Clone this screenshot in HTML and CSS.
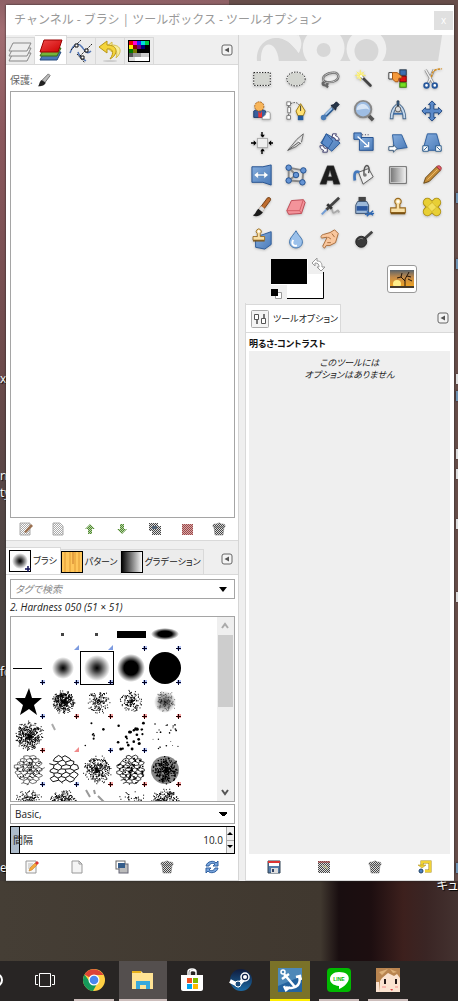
FILE: index.html
```html
<!DOCTYPE html>
<html lang="ja">

<head>
	<title>チャンネル - ブラシ | ツールボックス - ツールオプション</title>
	<meta charset="utf-8">
	<meta name="viewport" content="width=device-width, initial-scale=1">
	<link rel="stylesheet" href="styles.css">
</head>

<body>
	<!-- shared paints and symbols -->
	<svg class="defs" width="0" height="0" aria-hidden="true">
		<defs>
			<linearGradient id="blue" x1="0" y1="0" x2="1" y2="1"><stop offset="0" stop-color="#86aede"/><stop offset="1" stop-color="#4a7ab8"/></linearGradient>
			<linearGradient id="grey" x1="0" y1="0" x2="1" y2="0"><stop offset="0" stop-color="#777"/><stop offset="1" stop-color="#eee"/></linearGradient>
			<linearGradient id="blackWhite" x1="0" y1="0" x2="1" y2="0"><stop offset="0" stop-color="#000"/><stop offset="1" stop-color="#fff"/></linearGradient>
			<linearGradient id="sunset" x1="0" y1="0" x2="0" y2="1"><stop offset="0" stop-color="#59636a"/><stop offset="0.4" stop-color="#c28a4a"/><stop offset="1" stop-color="#f7a81c"/></linearGradient>
			<linearGradient id="steamBlue" x1="0" y1="0" x2="0" y2="1"><stop offset="0" stop-color="#101b3c"/><stop offset="1" stop-color="#1c6ba5"/></linearGradient>
			<linearGradient id="redSheet" x1="0" y1="0" x2="1" y2="1"><stop offset="0" stop-color="#f04a4a"/><stop offset="1" stop-color="#c00"/></linearGradient>
			<radialGradient id="soft"><stop offset="0" stop-color="#000"/><stop offset="0.25" stop-color="#000" stop-opacity="0.8"/><stop offset="1" stop-color="#000" stop-opacity="0"/></radialGradient>
			<radialGradient id="hard"><stop offset="0.5" stop-color="#000"/><stop offset="1" stop-color="#000" stop-opacity="0"/></radialGradient>
			<pattern id="ditherBlack" width="2" height="2" patternUnits="userSpaceOnUse"><rect width="2" height="2" fill="#ddd"/><path d="M0 0h1v1h-1zM1 1h1v1h-1z" fill="#444"/></pattern>
			<pattern id="ditherGrey" width="2" height="2" patternUnits="userSpaceOnUse"><rect width="2" height="2" fill="#fff"/><path d="M0 0h1v1h-1zM1 1h1v1h-1z" fill="#aaa"/></pattern>
			<pattern id="ditherGreen" width="2" height="2" patternUnits="userSpaceOnUse"><rect width="2" height="2" fill="#b9d2a8"/><path d="M0 0h1v1h-1zM1 1h1v1h-1z" fill="#4f8a30"/></pattern>
			<pattern id="ditherRed" width="2" height="2" patternUnits="userSpaceOnUse"><rect width="2" height="2" fill="#d8a8a8"/><path d="M0 0h1v1h-1zM1 1h1v1h-1z" fill="#9a4848"/></pattern>
		</defs>
		<symbol id="collapse" viewBox="0 0 12 12"><rect x="1" y="1" width="10" height="10" rx="2" fill="#f4f4f4" stroke="#666"/><path d="M8 3.500v5L3.500 6z" fill="#555"/></symbol>
		<symbol id="trash" viewBox="0 0 16 16"><path d="M2 4c0-1 3-1 4-1l1-1h2l1 1c1 0 4 0 4 1v2H2zM3 6h10l-1 8H4z" fill="url(#ditherBlack)" stroke="#777" stroke-width="0.500"/></symbol>
		<symbol id="page" viewBox="0 0 16 16"><path d="M3 2h7l3 3v9H3z" fill="#f4f4f4" stroke="#999"/><path d="M10 2v3h3" fill="none" stroke="#999"/></symbol>
		<symbol id="copy" viewBox="0 0 16 16"><rect x="2" y="2" width="9" height="8" fill="#fff" stroke="#666"/><rect x="5" y="5" width="9" height="9" fill="#bbb" stroke="#667"/><rect x="4" y="4" width="7" height="5" fill="#345c8a"/></symbol>
		<symbol id="stamp" viewBox="0 0 24 24"><path d="M10 9a3.500 3.500 0 1 1 4 0v4h6v5H4v-5h6z" fill="#f8e0a8" stroke="#9a6a1e" stroke-width="1.200"/><path d="M4 19h16" stroke="#7a5214" stroke-width="2"/><circle cx="12" cy="6" r="1.500" fill="#fff"/></symbol>
	</svg>

	<main class="desktop">
		<span class="shortcut left" style="top:371px">x</span>
		<span class="shortcut left" style="top:468px">n</span>
		<span class="shortcut left" style="top:485px">ty</span>
		<span class="shortcut left" style="top:664px">fc</span>
		<span class="shortcut left" style="top:860px">et</span>
		<span class="shortcut right" style="top:878px">キュ</span>
		<span class="tile blue" style="top:193px"></span>
		<span class="tile blue" style="top:259px"></span>
		<span class="tile" style="top:374px"></span>
		<span class="tile blue" style="top:391px"></span>
		<span class="tile" style="top:449px"></span>
		<span class="tile" style="top:469px"></span>
		<span class="tile" style="top:519px"></span>
		<span class="tile" style="top:592px"></span>
		<span class="tile blue" style="top:863px"></span>

		<section class="window">
			<header class="titlebar">
				<h1>チャンネル - ブラシ | ツールボックス - ツールオプション</h1>
				<button class="close" aria-label="閉じる">x</button>
			</header>

			<div class="columns">
				<section class="dock">
					<nav class="tabs">
						<button class="tab" aria-label="レイヤー"><svg viewBox="0 0 24 24"><g fill="#eee" stroke="#888"><path d="M5 14h18l-4 8H1z"/><path d="M5 9h18l-4 8H1z"/><path d="M5 4h18l-4 8H1z"/></g></svg></button>
						<button class="tab active" aria-label="チャンネル"><svg viewBox="0 0 24 24"><path d="M5 14h17l-4 8H1z" fill="#4a78b8" stroke="#274b7c"/><path d="M5 10h17l-4 8H1z" fill="#73b43c" stroke="#3a6a14"/><path d="M5 2h18l-4 12H1z" fill="url(#redSheet)" stroke="#900"/></svg></button>
						<button class="tab" aria-label="パス"><svg viewBox="0 0 24 24"><path d="M1 14C5 3 10 4 13 8s5 8 9 4M9 13c1 5 4 6 8 9" fill="none" stroke="#5577b5" stroke-width="1.500"/><path d="M2 11L12 1M11 17L23 5M8 15L16 24" stroke="#222" stroke-dasharray="2 1"/><path d="M6 5h3v3H6zM16 10h3v3h-3zM12 17h3v3h-3z" fill="#fff" stroke="#111"/></svg></button>
						<button class="tab" aria-label="作業履歴"><svg viewBox="0 0 24 24"><path d="M14 3L8 8l6 5v-3c4 0 6 3 4 9 6-5 6-13-4-13z" fill="#f8ee9c" stroke="#d6bf4e"/><path d="M9 2L1 8l8 6v-4c5-1 8 3 3 10 8-4 9-14-3-14z" fill="#f5d53c" stroke="#b89514"/><ellipse cx="12" cy="22" rx="7" ry="1" fill="#ccc"/></svg></button>
						<button class="tab" aria-label="パレット"><svg viewBox="0 0 24 24"><rect x="1" y="1" width="22" height="22" fill="#000"/><path d="M2 2h4v4H2z" fill="#e00"/><path d="M6 2h4v4H6z" fill="#f0c"/><path d="M10 2h4v4h-4z" fill="#22f"/><path d="M14 2h4v4h-4z" fill="#0dd"/><path d="M18 2h4v4h-4z" fill="#0c4"/><path d="M2 6h4v4H2z" fill="#fe0"/><path d="M6 6h4v4H6z" fill="#800"/><path d="M10 6h4v4h-4z" fill="#707"/><path d="M14 6h4v4h-4z" fill="#007"/><path d="M2 10h4v4H2z" fill="#070"/><path d="M6 10h4v4H6z" fill="#770"/><path d="M2 14h4v4H2z" fill="#555"/><path d="M6 14h8v4H6z" fill="#999"/><path d="M14 14h8v4h-8z" fill="#ccc"/><path d="M2 18h6v4H2z" fill="#ddd"/><path d="M8 18h14v4H8z" fill="#fff"/></svg></button>
						<button class="collapse" aria-label="このタブの設定"><svg><use href="#collapse"/></svg></button>
					</nav>
					<div class="panel">
						<div class="lockRow">保護:
							<button aria-label="ピクセルを保護"><svg viewBox="0 0 16 16"><path d="M6 8l7-7 2 2-6 8z" fill="#bbb" stroke="#666"/><path d="M5 8l5 3c-2 4-6 4-9 4 2-1 1-4 4-7z" fill="#222"/></svg></button>
						</div>
						<div class="channelList"></div>
						<div class="actions">
							<button aria-label="編集"><svg viewBox="0 0 16 16"><path d="M2 2h10v12H2z" fill="url(#ditherGrey)" stroke="#aaa"/><path d="M6 11l7-8 2 2-7 7z" fill="#9a7050"/></svg></button>
							<button aria-label="新規"><svg viewBox="0 0 16 16"><path d="M3 2h7l3 3v9H3z" fill="url(#ditherGrey)" stroke="#aaa"/></svg></button>
							<button aria-label="上へ"><svg viewBox="0 0 16 16"><path d="M8 3l5 5h-3v5H6V8H3z" fill="url(#ditherGreen)"/></svg></button>
							<button aria-label="下へ"><svg viewBox="0 0 16 16"><path d="M8 13l5-5h-3V3H6v5H3z" fill="url(#ditherGreen)"/></svg></button>
							<button aria-label="複製"><svg viewBox="0 0 16 16"><path d="M2 2h9v8H2zM5 5h9v9H5z" fill="url(#ditherBlack)"/><path d="M5 5h5v3H5z" fill="#567"/></svg></button>
							<button aria-label="選択範囲へ"><svg viewBox="0 0 16 16"><path d="M3 3h11v11H3z" fill="url(#ditherRed)"/></svg></button>
							<button aria-label="削除"><svg><use href="#trash"/></svg></button>
						</div>
					</div>

					<nav class="tabs brushTabs">
						<button class="tab active"><svg viewBox="0 0 22 22"><rect x="0.500" y="0.500" width="21" height="21" fill="#fff" stroke="#000"/><circle cx="11" cy="11" r="8" fill="url(#soft)"/><path d="M16 19h6M19 16v6" stroke="#115" stroke-width="1.500"/></svg>ブラシ</button>
						<button class="tab"><svg viewBox="0 0 22 22"><rect x="0.500" y="0.500" width="21" height="21" fill="#ffc65a" stroke="#000"/><path d="M4 1v20M9 1v20M14 1v20M18 1v20" stroke="#e09a35"/><path d="M12 1v12" stroke="#c97a2a"/></svg>パターン</button>
						<button class="tab"><svg viewBox="0 0 22 22"><rect x="0.500" y="0.500" width="21" height="21" fill="url(#blackWhite)" stroke="#000"/></svg>グラデーション</button>
						<button class="collapse" aria-label="このタブの設定"><svg><use href="#collapse"/></svg></button>
					</nav>
					<div class="panel brushPanel">
						<div class="combo tagSearch">
							<input type="text" placeholder="タグで検索" aria-label="タグで検索">
							<button class="arrow" aria-label="タグの一覧"></button>
						</div>
						<p class="brushName">2. Hardness 050 (51 × 51)</p>
						<div class="brushBox">
							<div class="brushGrid" id="brushGrid"></div>
							<div class="scrollbar">
								<button aria-label="上へスクロール"><svg viewBox="0 0 14 14"><path d="M4 9l3-4 3 4" fill="none" stroke="#aaa" stroke-width="2"/></svg></button>
								<div class="thumb"></div>
								<button aria-label="下へスクロール"><svg viewBox="0 0 14 14"><path d="M4 5l3 4 3-4" fill="none" stroke="#555" stroke-width="2"/></svg></button>
							</div>
						</div>
						<select class="combo" aria-label="ブラシのタグ"><option>Basic,</option></select>
						<div class="spin">
							<label for="spacing">間隔</label>
							<input id="spacing" type="text" value="10.0">
							<div class="steppers"><button aria-label="増やす" class="up"></button><button aria-label="減らす" class="down"></button></div>
						</div>
						<div class="actions">
							<button aria-label="ブラシの編集"><svg viewBox="0 0 16 16"><path d="M2 2h10v12H2z" fill="#f8f8f8" stroke="#999"/><path d="M4 5h5M4 7h4M4 9h3" stroke="#bbb"/><path d="M5 12l1-3 5-5 2 2-5 5z" fill="#f3a83b" stroke="#b8741a" stroke-width="0.500"/><path d="M11 4l2-2 2 2-2 2z" fill="#d33"/></svg></button>
							<button aria-label="新しいブラシ"><svg><use href="#page"/></svg></button>
							<button aria-label="ブラシの複製"><svg><use href="#copy"/></svg></button>
							<button aria-label="ブラシの削除"><svg><use href="#trash"/></svg></button>
							<button aria-label="ブラシの再読み込み"><svg viewBox="0 0 16 16"><path d="M2 7c1-5 8-6 10-3l2-2v5H9l2-2C9 4 6 4 5 7zM14 9c-1 5-8 6-10 3l-2 2V9h5l-2 2c2 1 5 1 6-2z" fill="#79a5dd" stroke="#2e5f9e"/></svg></button>
						</div>
					</div>
				</section>

				<section class="toolbox">
					<svg class="banner" viewBox="0 0 210 26" aria-hidden="true">
						<path d="M12 26C11 10 22 2 34 3c8 1 14 7 20 15 4-8 0-12-2-18h146l-4 26z" fill="#d7d7d7"/>
						<path d="M16 26c-1-22 16-22 18 0z" fill="#efefef"/>
						<path d="M34 3c8 1 14 7 20 15 4-8 3-12 0-18z" fill="#efefef"/>
						<circle cx="79" cy="13" r="21" fill="#efefef"/><circle cx="79" cy="15" r="7" fill="#d7d7d7"/>
						<circle cx="122" cy="14" r="20" fill="#efefef"/><circle cx="122" cy="16" r="12" fill="#d7d7d7"/>
					</svg>
					<div class="tools">
						<button aria-label="矩形選択"><svg viewBox="0 0 24 24"><rect x="3" y="5" width="18" height="14" fill="#d3d5d0" stroke="#fff"/><rect x="3" y="5" width="18" height="14" fill="none" stroke="#000" stroke-dasharray="1.500 1.500"/></svg></button>
						<button aria-label="楕円選択"><svg viewBox="0 0 24 24"><ellipse cx="12" cy="12" rx="10" ry="7.500" fill="#d3d5d0" stroke="#fff"/><ellipse cx="12" cy="12" rx="10" ry="7.500" fill="none" stroke="#000" stroke-dasharray="1.500 1.500"/></svg></button>
						<button aria-label="自由選択"><svg viewBox="0 0 24 24"><path d="M6 15C1 10 9 5 16 5s7 8-1 10c-4 1-6 0-8 1m0 0c-4-2-4 3 0 3s2-5-1-4m1 4l3 2" fill="none" stroke="#666" stroke-width="2.500"/><path d="M6 15C1 10 9 5 16 5s7 8-1 10c-4 1-6 0-8 1" fill="none" stroke="#ccc"/></svg></button>
						<button aria-label="ファジー選択"><svg viewBox="0 0 24 24"><circle cx="8" cy="8" r="4" fill="#fbf3a0"/><path d="M8 2v12M2 8h12M4 4l8 8M12 4l-8 8" stroke="#f7ea6a"/><path d="M10 10l9 9" stroke="#444" stroke-width="3" stroke-linecap="round"/><path d="M8 8l3 3" stroke="#fff" stroke-width="2"/></svg></button>
						<button aria-label="色域を選択"><svg viewBox="0 0 24 24"><rect x="14" y="2" width="7" height="6" fill="#3d6eb0" stroke="#234"/><rect x="14" y="9" width="7" height="6" fill="#d11" stroke="#700"/><rect x="14" y="16" width="7" height="5" fill="#7d2" stroke="#370"/><path d="M2 5h4v7H2z" fill="#fff" stroke="#333"/><path d="M6 5h5l5 4v2h-3l-1 4H9l-3-3z" fill="#f59a3c" stroke="#a5540e"/></svg></button>
						<button aria-label="電脳はさみ"><svg viewBox="0 0 24 24"><path d="M5 2l8 14M14 2L8 16" stroke="#888" stroke-width="3"/><path d="M5 2l8 14M14 2L8 16" stroke="#eee" stroke-width="1.500"/><circle cx="6" cy="19" r="2.500" fill="#fff" stroke="#27589c" stroke-width="2"/><circle cx="15" cy="19" r="2.500" fill="#fff" stroke="#27589c" stroke-width="2"/><path d="M11 10c2-5 1-9 12-9" fill="none" stroke="#d38b1d" stroke-width="1.500" stroke-dasharray="3 1"/></svg></button>

						<button aria-label="前景抽出選択"><svg viewBox="0 0 24 24"><path d="M3 19v-7c2-2 10-2 13 0v7z" fill="#385f9e" stroke="#1c3966"/><path d="M8 12l2 3 2-3v7H8z" fill="#e33"/><circle cx="9" cy="7" r="5" fill="#f7b55a" stroke="#a8631a" stroke-dasharray="2 1"/><path d="M12 21c0-4 4-3 4-6s5-3 5 0v6z" fill="#fff" stroke="#999"/></svg></button>
						<button aria-label="パス"><svg viewBox="0 0 24 24"><path d="M4 3v17M6 4c7-3 9 0 11 4" fill="none" stroke="#555" stroke-dasharray="2 1"/><path d="M2 2h4v4H2zM2 17h4v4H2zM3 8h3v6H3z" fill="#fff" stroke="#777"/><path d="M14 17l-2-5 5-8 5 8-2 5z" fill="#ffe173" stroke="#9a740c"/><path d="M17 6v6" stroke="#333"/><path d="M14 17h6v5h-6z" fill="#245c9e"/></svg></button>
						<button aria-label="スポイト"><svg viewBox="0 0 24 24"><path d="M15 9L7 17" stroke="#2b5a91" stroke-width="4"/><path d="M14 9l-7 7" stroke="#a5c9ef" stroke-width="2"/><path d="M13 6l5 5 1-3 3-3-3-3-3 3z" fill="#263548" stroke="#152033"/><circle cx="5" cy="19" r="3" fill="#4a7db8"/></svg></button>
						<button aria-label="ズーム"><svg viewBox="0 0 24 24"><path d="M16 16l6 6" stroke="#555" stroke-width="4"/><circle cx="11" cy="10" r="9" fill="#9ebde3" stroke="#888" stroke-width="2"/><path d="M4 11c0-8 11-10 14 0-4-3-9 0-14 0z" fill="#d7e5f5"/></svg></button>
						<button aria-label="ものさし"><svg viewBox="0 0 24 24"><path d="M11 6c-4 3-6 8-6 15M13 6c4 3 6 8 6 15" fill="none" stroke="#4a6a8d" stroke-width="4"/><path d="M11 6c-4 3-6 8-6 14M13 6c4 3 6 8 6 14" fill="none" stroke="#c4d8ed" stroke-width="2"/><path d="M7 15h10" fill="none" stroke="#3d6ea8" stroke-width="2"/><circle cx="12" cy="10" r="3" fill="#ddd" stroke="#555"/><path d="M11 1h2v5h-2z" fill="#3d6ea8" stroke="#234"/></svg></button>
						<button aria-label="移動"><svg viewBox="0 0 24 24"><path d="M12 1l4 4h-2v5h5V8l4 4-4 4v-2h-5v5h2l-4 4-4-4h2v-5H5v2l-4-4 4-4v2h5V5H8z" fill="#5a89c9" stroke="#1f4680"/></svg></button>

						<button aria-label="整列"><svg viewBox="0 0 24 24"><rect x="7" y="7" width="11" height="10" fill="#eee" stroke="#aaa"/><path d="M12 0v5M12 19v5M0 12h5M20 12h4" stroke="#000" stroke-width="1.500"/><path d="M10 3h5l-2 3zM10 21h5l-2-3zM3 9v6l3-3zM22 9v6l-3-3z"/></svg></button>
						<button aria-label="切り抜き"><svg viewBox="0 0 24 24"><path d="M3 20L13 8l7-6-2 9-6 5z" fill="#ddd" stroke="#666"/><path d="M3 20l12-9 2 2" fill="none" stroke="#555"/><path d="M14 9l4 3" stroke="#fff"/></svg></button>
						<button aria-label="回転"><svg viewBox="0 0 24 24"><path d="M8 2l9 5 6 5-9 9-6-5-6-4z" fill="url(#blue)" stroke="#285896"/><path d="M8 2l7 8-5 8-7-6z" fill="#5b8bca" stroke="#285896"/><path d="M15 2h4l-1 2c3 1 4 3 4 5h-4c0-2-1-3-3-3l-1 1zM9 22H4l1-2c-3-1-4-3-4-5h4c0 2 1 3 2 3l2-1z" fill="#fff" stroke="#336"/></svg></button>
						<button aria-label="拡大縮小"><svg viewBox="0 0 24 24"><path d="M7 6h15v14H7z" fill="url(#blue)" stroke="#1f4d8d"/><path d="M1 1h8v7H1z" fill="#6b99d2" stroke="#1f4d8d"/><path d="M5 5l12 11m0-5v5h-5" fill="none" stroke="#fff" stroke-width="1.500"/><path d="M10 3h9" stroke="#224" stroke-dasharray="1 2"/></svg></button>
						<button aria-label="剪断変形"><svg viewBox="0 0 24 24"><path d="M6 3h10l6 14-14 2z" fill="url(#blue)" stroke="#2b5c9b"/><path d="M2 16h5v-2l4 4-4 4v-2H2z" fill="#fff" stroke="#357"/></svg></button>
						<button aria-label="遠近法"><svg viewBox="0 0 24 24"><path d="M7 2h10l5 18H2z" fill="url(#blue)" stroke="#2b5c9b"/><path d="M2 15h6v6H2zM16 15h6v6h-6z" fill="#fff" stroke="#258"/><path d="M3 20l4-4M21 20l-4-4" stroke="#258"/></svg></button>

						<button aria-label="鏡像反転"><svg viewBox="0 0 24 24"><path d="M1 3h12l9-2v22l-9-3H1z" fill="url(#blue)" stroke="#1f4d8d"/><path d="M3 12l5-4v3h6V8l5 4-5 4v-3H8v3z" fill="#fff" stroke="#47a" stroke-width="0.500"/></svg></button>
						<button aria-label="ケージ変形"><svg viewBox="0 0 24 24"><path d="M4 4l16 3-1 12-15-1 8-6-8-8v14" fill="none" stroke="#888" stroke-width="2"/><g fill="#6594d4" stroke="#204e8c"><circle cx="4" cy="4" r="3"/><circle cx="20" cy="7" r="3"/><circle cx="12" cy="12" r="3"/><circle cx="4" cy="18" r="3"/><circle cx="19" cy="20" r="3"/></g></svg></button>
						<button aria-label="テキスト"><svg viewBox="0 0 24 24"><path d="M1 22L9 2h7l7 20h-7l-1-4H9l-1 4zM10 14h4l-2-7z" fill="#1c1c1c" fill-rule="evenodd" stroke="#444" stroke-width="0.500"/></svg></button>
						<button aria-label="塗りつぶし"><svg viewBox="0 0 24 24"><path d="M6 9l11-4 5 9-11 8z" fill="#eee" stroke="#555"/><path d="M12 12c-1-15 8-12 5-2" fill="none" stroke="#555" stroke-width="1.500"/><circle cx="13" cy="12" r="2" fill="#777"/><path d="M7 9C2 7 1 10 2 18" fill="none" stroke="#4478bc" stroke-width="3"/></svg></button>
						<button aria-label="ブレンド"><svg viewBox="0 0 24 24"><rect x="3" y="3" width="18" height="18" fill="#fff" stroke="#555"/><rect x="4" y="4" width="16" height="16" fill="url(#grey)"/></svg></button>
						<button aria-label="鉛筆"><svg viewBox="0 0 24 24"><path d="M3 21l2-6L17 3l4 4L9 19z" fill="#c48c38" stroke="#654511"/><path d="M17 3c3-3 7 1 4 4z" fill="#e65b6c" stroke="#933"/><path d="M7 17L18 6" stroke="#eec16d"/></svg></button>

						<button aria-label="ブラシで描画"><svg viewBox="0 0 24 24"><path d="M9 14L18 2c3-1 4 1 3 3l-9 12z" fill="#bd6c2f" stroke="#713b12"/><path d="M11 11l4 3-3 4-4-3z" fill="#ddd"/><path d="M8 14l5 4c-3 4-8 5-11 3 3-1 3-4 6-7z" fill="#1b1b1b"/></svg></button>
						<button aria-label="消しゴム"><svg viewBox="0 0 24 24"><path d="M2 16L7 5l13-1 2 3-4 12-14 1z" fill="#f3939a" stroke="#bb4651"/><path d="M2 16h14L20 4M16 16l2 3" fill="none" stroke="#d05a62"/></svg></button>
						<button aria-label="エアブラシ"><svg viewBox="0 0 24 24"><path d="M22 2L8 15" stroke="#444" stroke-width="3"/><path d="M10 11c7 2 3 9 7 7s3-4 5 0" fill="none" stroke="#aaa" stroke-width="2"/><path d="M9 9l5 5" stroke="#333" stroke-width="3"/><path d="M8 15l-5 5" stroke="#6f9bd5" stroke-width="2"/></svg></button>
						<button aria-label="インクで描画"><svg viewBox="0 0 24 24"><path d="M6 1h8v5H6z" fill="#444"/><path d="M5 6h10l2 4v9H3v-9z" fill="#9cb8d8" stroke="#39506c"/><path d="M4 11h12v5H4z" fill="#2b579e"/><path d="M15 17l7 4m-7 1l7-6M13 20l10-1" stroke="#2c65b1" stroke-width="1.500"/></svg></button>
						<button aria-label="スタンプ"><svg><use href="#stamp"/></svg></button>
						<button aria-label="修復"><svg viewBox="0 0 24 24"><g stroke="#a98b13" stroke-width="10" stroke-linecap="round"><path d="M7 7l10 10M17 7L7 17"/></g><g stroke="#e8cf35" stroke-width="8" stroke-linecap="round"><path d="M7 7l10 10M17 7L7 17"/></g><path d="M12 7l5 5-5 5-5-5z" fill="#f3e05c" stroke="#b69517" stroke-dasharray="1 1"/></svg></button>

						<button aria-label="遠近スタンプ"><svg viewBox="0 0 24 24"><path d="M5 10l17-6v14l-7 5-10-2z" fill="url(#blue)" stroke="#285896"/><use href="#stamp" x="-1" y="-1" width="19" height="19"/></svg></button>
						<button aria-label="ぼかし/シャープ"><svg viewBox="0 0 24 24"><path d="M12 3c3 6 7 8 7 12 0 9-14 9-14 0 0-4 4-7 7-12z" fill="#9ac0ea" stroke="#396da8"/><path d="M9 13c-3 6 2 7 4 6" fill="none" stroke="#fff" stroke-width="2"/></svg></button>
						<button aria-label="にじみ"><svg viewBox="0 0 24 24"><path d="M4 20l5-10-6 1c-2-1 0-4 2-4l7-2 5-3 4 4-3 10-6 3H8l-2 3z" fill="#f9c79e" stroke="#a56836"/><path d="M10 10l3 2M14 6l3 4M9 16h4" stroke="#a56836"/></svg></button>
						<button aria-label="暗室"><svg viewBox="0 0 24 24"><path d="M10 14L21 4" stroke="#444" stroke-width="3"/><circle cx="9" cy="15" r="6" fill="#3a3a3a" stroke="#222"/><path d="M6 13c1-2 4-2 5-1" fill="none" stroke="#888"/></svg></button>
					</div>
					<div class="colorArea">
						<button class="colors" aria-label="描画色と背景色"><svg viewBox="0 0 56 44"><path d="M17 17h37v25H17z" fill="#fff"/><path d="M17 41.500h36.500V15" fill="none" stroke="#000"/><path d="M1 2h37v26H1z" fill="#fff"/><path d="M1 2h36v25H1z" fill="#000"/><path d="M5.500 35.500h6v6h-6z" fill="#fff" stroke="#999"/><path d="M1 32h7v7H1z" fill="#000"/><path d="M42 6l5-5v3c4 0 5 2 5 6h3l-4 4-4-4h2c0-3-1-4-4-4v3z" fill="#fff" stroke="#999"/></svg></button>
						<button class="preview" aria-label="使用中の画像"><svg viewBox="0 0 24 18"><path d="M0 0h24v18H0z" fill="url(#sunset)"/><circle cx="7" cy="14" r="4" fill="#ffee8a"/><path d="M15 16V9M15 11l-4-4-4 1M15 9l3-5 1-2M17 6l4 1M11 7l1-4M18 9l4 2" fill="none" stroke="#241407"/><path d="M0 16h24v2H0z" fill="#453a2b"/></svg></button>
					</div>

					<div class="optionsDock">
						<nav class="tabs optionTabs">
							<button class="tab active"><svg viewBox="0 0 18 18"><rect x="0.500" y="0.500" width="17" height="17" rx="1" fill="#f4f4f4" stroke="#aaa"/><path d="M3.500 4.500h4v5h-4zM10.500 8.500h4v5h-4z" fill="#fff" stroke="#555"/><path d="M5 10h2v4H5zM12 4h2v4h-2z" fill="#777"/></svg>ツールオプション</button>
							<button class="collapse" aria-label="このタブの設定"><svg><use href="#collapse"/></svg></button>
						</nav>
						<div class="panel optionPanel">
							<h2>明るさ-コントラスト</h2>
							<div class="noOptions">このツールには<br>オプションはありません</div>
							<div class="actions">
								<button aria-label="オプションの保存"><svg viewBox="0 0 16 16"><path d="M2 2h12v12H2z" fill="#557ba8" stroke="#345"/><path d="M3 2h10v5H3z" fill="#fff"/><path d="M2 2h12v2H2z" fill="#d33"/><path d="M5 9h7v5H5z" fill="#ddd"/><path d="M6 10h2v3H6z" fill="#346"/></svg></button>
								<button aria-label="オプションの復元"><svg viewBox="0 0 16 16"><path d="M2 2h12v12H2z" fill="url(#ditherBlack)"/><path d="M2 2h12v2H2z" fill="#a44" opacity="0.600"/><path d="M5 6l6 1 1 4z" fill="#cc9" opacity="0.700"/></svg></button>
								<button aria-label="オプションの削除"><svg><use href="#trash"/></svg></button>
								<button aria-label="初期値に戻す"><svg viewBox="0 0 16 16"><path d="M5 6V3h8v9H8" fill="none" stroke="#a88a10" stroke-width="3"/><path d="M5 6V3h8v9H8" fill="none" stroke="#f1d235" stroke-width="2"/><path d="M1 6h8L5 9z" fill="#f1d235" stroke="#a88a10" stroke-width="0.500"/><circle cx="4" cy="12" r="2" fill="#4b7fc1" stroke="#246"/></svg></button>
							</div>
						</div>
					</div>
				</section>
			</div>
		</section>
	</main>

	<footer class="taskbar">
		<button class="task cortana" aria-label="検索"><svg viewBox="0 0 24 24"><circle cx="12" cy="12" r="6" fill="none" stroke="#fff" stroke-width="2"/></svg></button>
		<button class="task" aria-label="タスクビュー"><svg viewBox="0 0 24 24"><path d="M6.500 5.500h11v13h-11zM5 7.500H2.500v9H5M19 7.500h2.500v9H19" fill="none" stroke="#fff"/></svg></button>
		<button class="task running" aria-label="Chrome"><svg viewBox="0 0 24 24"><circle cx="12" cy="12" r="11" fill="#ffd044"/><path d="M12 12L2.500 6.500A11 11 0 0 1 21.500 7H12z" fill="#dc4437"/><path d="M2.500 6.500A11 11 0 0 0 11 23l5-9-8 0z" fill="#159a5b"/><circle cx="12" cy="12" r="5.500" fill="#fff"/><circle cx="12" cy="12" r="4.300" fill="#4a87ee"/></svg></button>
		<button class="task running focused" aria-label="エクスプローラー"><svg viewBox="0 0 24 24"><path d="M1 3h9l2 2h10v16H1z" fill="#ffe394"/><path d="M1 3h9v2H1z" fill="#e8b21c"/><path d="M5 21v-8h14v8h-4v-4H9v4z" fill="#38a9dc"/></svg></button>
		<button class="task" aria-label="ストア"><svg viewBox="0 0 24 24"><path d="M8 8V4c0-4 8-4 8 0v4M10 7V4c0-2 5-2 6 0" fill="none" stroke="#fff" stroke-width="1.500"/><path d="M1 7h22v14c0 1-1 2-2 2H3c-1 0-2-1-2-2z" fill="#fff"/><path d="M7 10h5v5H7z" fill="#f25022"/><path d="M13 10h5v5h-5z" fill="#7fba00"/><path d="M7 16h5v5H7z" fill="#00a4ef"/><path d="M13 16h5v5h-5z" fill="#ffb900"/></svg></button>
		<button class="task" aria-label="Steam"><svg viewBox="0 0 24 24"><circle cx="12" cy="12" r="11" fill="url(#steamBlue)"/><path d="M1 13l8 4 7-7" fill="none" stroke="#fff" stroke-width="4"/><circle cx="16" cy="9" r="4" fill="#12244a" stroke="#fff" stroke-width="1.500"/><circle cx="16" cy="9" r="2" fill="#fff"/><circle cx="9" cy="16" r="3" fill="#1b4b7a" stroke="#fff"/></svg></button>
		<button class="task alert" aria-label="艦これ"><svg viewBox="0 0 24 24"><rect width="24" height="24" fill="#24639e"/><path d="M0 0h24v8L0 18z" fill="#4d88b8"/><path d="M6 6l11 13M4 11l7-5M8 19c4 2 9 1 12-2 2-3 2-6 1-8M6 18l2 4 4-3M18 9l4-1 1 4" fill="none" stroke="#fff" stroke-width="2.500"/><circle cx="5" cy="4" r="2" fill="none" stroke="#fff" stroke-width="1.500"/></svg></button>
		<button class="task running" aria-label="LINE"><svg viewBox="0 0 24 24"><rect width="24" height="24" rx="4" fill="#00b900"/><path d="M12 4c14 0 12 12 0 17v-3C-1 17 1 4 12 4z" fill="#fff"/><text x="12" y="13" class="lineText">LINE</text></svg></button>
		<button class="task running" aria-label="ゲーム"><svg viewBox="0 0 24 24"><rect width="24" height="24" fill="#fbe3d0"/><path d="M0 0h24v10l-3-4-3 2-6-3-6 5-2 3-1 11H0z" fill="#b98550"/><path d="M3 4l9-3-6 6zM14 1l7 3-4 1z" fill="#deb27a"/><path d="M0 14h3v10H0z" fill="#fbe3d0"/><path d="M9 11v5M20 11v5" stroke="#241a1a" stroke-width="2"/><path d="M14 21h3l-1 2z" fill="#d44"/><path d="M6 19h4M19 19h3" stroke="#f8b8ac" stroke-width="2"/></svg></button>
	</footer>

	<script src="brushes.js"></script>
</body>
</html>
```
FILE: styles.css
```css
* { box-sizing: border-box; }
html, body { margin: 0; min-height: 100%; }
body {
	display: flex;
	flex-direction: column;
	min-height: 100vh;
	color: #222;
	font: 10px/12px "Open Sans", "Noto Sans CJK JP", sans-serif;
	font-feature-settings: "palt";
}
button, input, select { font: inherit; color: inherit; padding: 0; border: 0; border-radius: 0; background: none; }
button { display: flex; align-items: center; justify-content: center; }
svg { display: block; flex: none; }
h1, h2, p { margin: 0; font-weight: normal; }
.defs { position: absolute; }

/* desktop */
.desktop {
	position: relative;
	flex: 1;
	display: flex;
	overflow: hidden;
	padding: 5px 4px 80px 6px;
	background:
		linear-gradient(90deg, #453e35 0, #40382f 70%, #190e10 74%, #1d0e10 81%, #3d201d 88%, #3a2524 93%, #443230) bottom / 100% 80px no-repeat,
		linear-gradient(90deg, transparent 50%, #674e4a 50%),
		linear-gradient(#8e6065 0, #a16d72 3%, #8b585d 14%, #6c4a4b 38%, #4d4543 58%, #3d3731);
}
.shortcut {
	position: absolute;
	color: #fff;
	font-size: 12px;
	line-height: 15px;
	text-shadow: 1px 1px 1px #000;
}
.shortcut.left { left: 0; }
.shortcut.right { right: 0; }
.tile { position: absolute; right: 0; width: 2px; height: 10px; background: #ddd; box-shadow: 0 0 1px #000; }
.tile.blue { background: #6f93b3; box-shadow: 0 0 2px #012; }

/* window */
.window {
	position: relative;
	flex: 1;
	display: flex;
	flex-direction: column;
	background: #efefef;
	box-shadow: 0 0 2px #222;
}
.titlebar {
	display: flex;
	align-items: center;
	justify-content: space-between;
	height: 30px;
	padding: 0 1px 0 8px;
	background: #fff;
}
.titlebar h1 { font-size: 12px; line-height: 16px; color: #999; white-space: nowrap; font-feature-settings: normal; }
.close { width: 19px; height: 19px; background: #e0e0e0; color: #fff; }
.columns { flex: 1; display: grid; grid-template-columns: 13fr 12fr; }
.dock { display: flex; flex-direction: column; min-width: 0; border-right: 1px solid #d5d5d5; }

.tabs { display: flex; align-items: flex-end; height: 29px; }
.tab { height: 27px; width: 29px; border: 1px solid #d9d9d9; border-width: 1px 1px 0 0; background: #ececec; }
.tab.active { height: 29px; width: 32px; background: #fff; }
.tabs .tab svg { width: 24px; height: 24px; }
.collapse { margin: 0 5px 0 auto; align-self: center; }
.collapse svg { width: 12px; height: 12px; }
.panel {
	display: flex;
	flex-direction: column;
	background: #fff;
	border-top: 1px solid #d9d9d9;
	border-bottom: 1px solid #d9d9d9;
	padding: 0 3px 0 4px;
}
.lockRow { display: flex; align-items: center; gap: 4px; height: 26px; padding-top: 4px; color: #666; }
.lockRow svg { width: 14px; height: 14px; }
.channelList { height: 427px; border: 1px solid #a5a5a5; }
.actions { display: flex; height: 22px; }
.actions button { flex: 1; }
.actions svg { width: 16px; height: 16px; }
.brushPanel .actions, .optionPanel .actions { height: 26px; }

/* brushes */
.brushTabs { height: 31px; margin-top: 2px; font-size: 9px; }
.brushTabs .tab { width: auto; height: 25px; gap: 2px; padding-right: 2px; white-space: nowrap; }
.brushTabs .tab.active { width: auto; height: 27px; padding: 0 3px; }
.brushTabs .tab svg { width: 22px; height: 22px; }
.brushPanel { flex: 1; }
.combo { display: flex; width: 100%; height: 20px; border: 1px solid #a5a5a5; }
.tagSearch { margin-top: 4px; }
.tagSearch input { flex: 1; min-width: 0; padding-left: 4px; }
.tagSearch input::placeholder { color: #888; font-style: italic; }
.arrow { width: 22px; }
.arrow::after { content: ""; border: 4px solid transparent; border-top: 5px solid #000; border-bottom: 0; }
.brushName { line-height: 17px; font-style: italic; }
.brushBox { flex: 1; display: flex; min-height: 186px; height: 186px; border: 1px solid #a5a5a5; overflow: hidden; }
.brushGrid { flex: 1; display: grid; grid-template-columns: repeat(5, 34px); grid-auto-rows: 34px; padding-left: 1px; height: 184px; overflow: hidden; }
.brushGrid svg { width: 34px; height: 34px; }
.scrollbar { display: flex; flex-direction: column; width: 17px; background: #efefef; }
.scrollbar svg { width: 14px; height: 18px; }
.thumb { height: 72px; margin: 0 1px auto; background: #cdcdcd; }
select.combo {
	margin-top: 2px;
	padding: 0 4px;
	appearance: none;
	background: conic-gradient(from 315deg at 50% 5px, #000 90deg, transparent 90deg) right 7px center / 8px 5px no-repeat #fff;
}
.spin {
	display: flex;
	align-items: center;
	height: 28px;
	margin-top: 2px;
	padding-left: 2px;
	border: 1px solid #000;
	background: linear-gradient(90deg, #adbccb 8px, #000 8px, #000 9px, #fff 9px);
}
.spin input { flex: 1; min-width: 0; padding-right: 3px; text-align: right; }
.steppers { display: flex; flex-direction: column; align-self: stretch; width: 8px; background: #eee; border-left: 1px solid #aaa; }
.steppers button { flex: 1; }
.steppers .up { border-bottom: 1px solid #aaa; }
.steppers button::after { content: ""; border: 3px solid transparent; }
.steppers .up::after { border-bottom-color: #000; border-top: 0; }
.steppers .down::after { border-top-color: #000; border-bottom: 0; }

/* toolbox */
.toolbox { display: flex; flex-direction: column; min-width: 0; padding-left: 6px; }
.banner { width: 100%; height: 26px; }
.tools { display: grid; grid-template-columns: repeat(6, 34px); grid-auto-rows: 32px; padding-top: 2px; }
.tools svg { width: 22px; height: 22px; filter: drop-shadow(0 1px 1px #bbb); }
.colorArea { display: flex; align-items: center; justify-content: space-between; height: 48px; padding: 0 37px 0 25px; }
.colors svg { width: 56px; height: 44px; }
.preview { width: 30px; height: 28px; border: 1px solid #999; border-radius: 3px; background: #fff; }
.preview svg { width: 24px; height: 18px; }
.optionsDock { flex: 1; display: flex; flex-direction: column; border-left: 1px solid #d9d9d9; }
.optionTabs .tab.active { width: auto; height: 28px; padding: 0 2px 0 5px; gap: 4px; font-size: 9px; }
.optionTabs .tab svg { width: 18px; height: 18px; }
.optionPanel { flex: 1; padding: 0 4px 0 3px; }
.optionPanel h2 { padding-top: 4px; font-size: 9px; line-height: 14px; font-weight: bold; color: #111; }
.noOptions { flex: 1; padding-top: 6px; background: #efefef; font-size: 9px; font-style: italic; text-align: center; }

/* taskbar */
.taskbar { display: flex; height: 40px; background: #282524; overflow: hidden; }
.task { flex: none; width: 48px; margin-right: 1px; border: 2px solid transparent; border-width: 0 0 2px; }
.task svg { width: 24px; height: 24px; }
.task.cortana { margin-left: -28px; }
.task.running { width: 40px; margin: 0 5px 0 4px; border-bottom-color: #cbbcba; }
.task.focused { width: 48px; margin: 0 1px 0 0; background: #544f4e; }
.task.alert { width: 40px; margin: 0 5px 0 4px; background: #7a7228; border-bottom-color: #ffee00; }
.lineText { font: bold 5px "Liberation Sans", sans-serif; fill: #00b900; text-anchor: middle; }
```
FILE: brushes.js
```js
// fixed seed, so the splatter brushes look the same every time
var seed = 7;
function rand(){
	seed = (seed * 16807) % 2147483647;
	return seed / 2147483647;
}

function splatter(count, radius, size){
	var d = "";
	for(var a = 0; a < count; a++){
		var angle = rand() * Math.PI * 2;
		var r = Math.pow(rand(), 0.8) * radius * (0.8 + rand() * 0.3);
		var x = (17 + Math.cos(angle) * r).toFixed(1);
		var y = (17 + Math.sin(angle) * r).toFixed(1);
		d += "M" + x + " " + y + "h" + size;
	}
	return '<path d="' + d + '" stroke="#000" stroke-width="' + size + '"/>';
}

// jittered brick pattern, cut to a circle
function cells(step, width){
	var points = [], d = "";
	var n = Math.ceil(34 / step) + 1;
	for(var j = 0; j < n; j++){
		points.push([]);
		for(var i = 0; i < n; i++){
			points[j].push([
				i * step + (rand() - 0.5) * step * 0.5,
				j * step + ((i + j) % 2 ? 0.2 : -0.2) * step + (rand() - 0.5) * step * 0.4
			]);
		}
	}
	function edge(p, q){
		if(Math.hypot(p[0] - 17, p[1] - 17) > 16 || Math.hypot(q[0] - 17, q[1] - 17) > 16){ return; }
		d += "M" + p[0].toFixed(1) + " " + p[1].toFixed(1) + "L" + q[0].toFixed(1) + " " + q[1].toFixed(1);
	}
	for(var j = 0; j < n; j++){
		for(var i = 0; i < n; i++){
			if(i + 1 < n){ edge(points[j][i], points[j][i + 1]); }
			if(j + 1 < n && (i + j) % 2){ edge(points[j][i], points[j + 1][i]); }
		}
	}
	return '<path d="' + d + '" fill="none" stroke="#111" stroke-width="' + width + '"/>';
}

function dots(count, size){
	var out = "";
	for(var a = 0; a < count; a++){
		out += '<circle cx="' + (4 + rand() * 26) + '" cy="' + (4 + rand() * 26) + '" r="' + size * (0.5 + rand() / 2) + '"/>';
	}
	return out;
}

var plusBlue = '<path d="M29 29h4v4h-4z" fill="#b0c0f0"/><path d="M28 31h5v1h-5zM30 29h1v5h-1z" fill="#002"/>';
var plusRed = '<path d="M29 29h4v4h-4z" fill="#f5a0a0"/><path d="M28 31h5v1h-5zM30 29h1v5h-1z" fill="#200"/>';
var cornerBlue = '<path d="M33 28v5h-5z" fill="#7d9be0"/>';
var cornerRed = '<path d="M33 28v5h-5z" fill="#f08a8a"/>';

var brushes = [
	'',
	'<path d="M15 16h3v3h-3z" fill="#444"/>' + cornerBlue,
	'<path d="M15 16h3v3h-3z" fill="#444"/>' + cornerBlue,
	'<path d="M3 14h29v7H3z"/>' + plusBlue,
	'<ellipse cx="17" cy="17" rx="14" ry="6" fill="url(#hard)"/>' + plusBlue,
	'<path d="M1 17.500h29" stroke="#000"/>' + plusBlue,
	'<circle cx="17" cy="17" r="11" fill="url(#soft)"/>' + plusBlue,
	'<rect x="0.500" y="0.500" width="33" height="33" fill="none" stroke="#000"/><circle cx="17" cy="17" r="13" fill="url(#soft)"/>' + plusBlue,
	'<circle cx="17" cy="17" r="14" fill="url(#hard)"/>' + plusBlue,
	'<circle cx="17" cy="17" r="16"/>' + plusBlue,
	'<path d="M17 3l3 10h10l-8 7 3 10-8-6-9 6 3-10-8-7h10z"/>' + plusBlue,
	splatter(420, 11, 1) + plusRed,
	splatter(150, 12, 1) + plusRed,
	splatter(150, 11, 1) + plusRed,
	'<circle cx="17" cy="17" r="11" fill="url(#soft)" opacity="0.7"/>' + splatter(120, 11, 0.7) + plusRed,
	splatter(450, 14, 1) + plusRed,
	'<path d="M6 5l3 6" stroke="#aaa" stroke-width="2"/>' + cornerRed,
	dots(8, 1.3) + plusBlue,
	dots(22, 1.6) + plusBlue,
	dots(22, 0.9),
	cells(3, 0.6) + splatter(90, 13, 1) + plusBlue,
	cells(4, 1) + plusBlue,
	splatter(320, 14, 1) + plusRed,
	cells(3, 0.8) + splatter(60, 14, 1.5) + plusRed,
	'<circle cx="17" cy="17" r="14" fill="#888"/>' + splatter(220, 13, 1.3) + plusRed,
	splatter(260, 14, 1),
	splatter(380, 14, 1),
	'<path d="M6 3l4 7M18 9l6 6M14 3l1 4" stroke="#999" stroke-width="2"/>',
	splatter(100, 14, 1),
	splatter(420, 15, 1)
];

document.getElementById("brushGrid").innerHTML = brushes.map(function(shape){
	return '<svg viewBox="0 0 34 34">' + shape + '</svg>';
}).join("");
```
